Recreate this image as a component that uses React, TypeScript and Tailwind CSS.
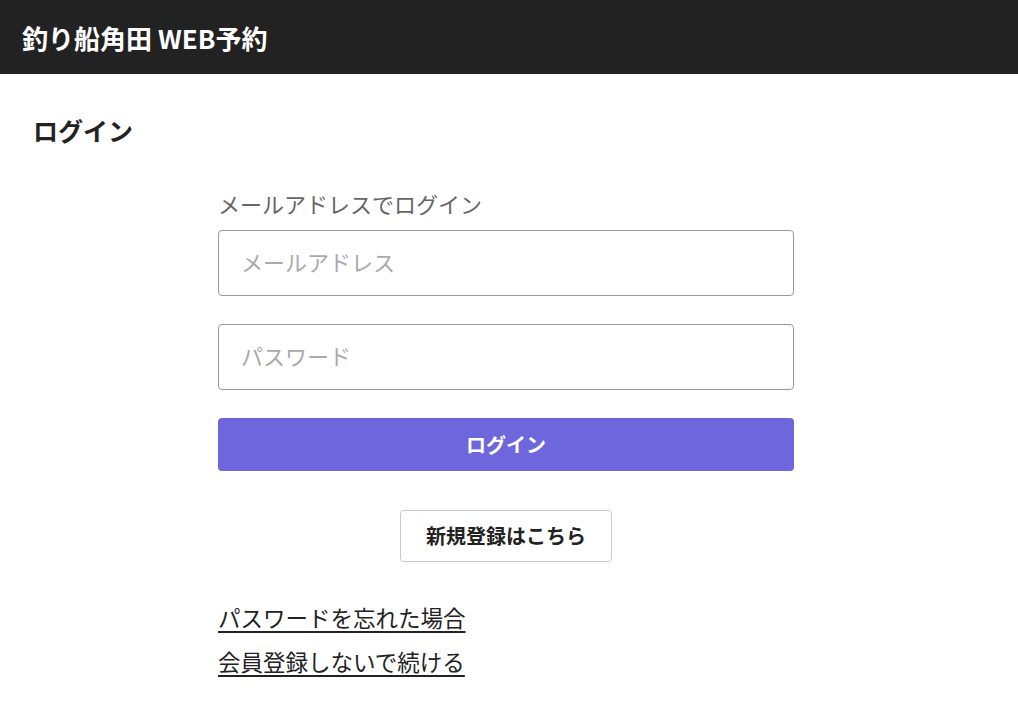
export default function App() {
  return (
    <div className="min-h-screen bg-white text-[#222] font-['Noto_Sans_CJK_JP',sans-serif]">
      <header className="h-[74px] bg-[#222222] flex items-center px-[22px]">
        <h1 className="text-[26px] font-bold text-white">釣り船角田 WEB予約</h1>
      </header>

      <main className="px-[33px] pt-[38px]">
        <h2 className="text-[25px] font-bold leading-[36px]">ログイン</h2>

        <div className="w-[576px] ml-[185px] mt-[41px] flex flex-col">
          <p className="text-[22px] text-[#666] leading-[28px]">メールアドレスでログイン</p>
          <input
            type="email"
            placeholder="メールアドレス"
            className="mt-[13px] h-[66px] w-full rounded border border-[#999] px-[22px] pb-[5px] text-[22px] placeholder:text-[#aaa] outline-none"
          />
          <input
            type="password"
            placeholder="パスワード"
            className="mt-[28px] h-[66px] w-full rounded border border-[#999] px-[22px] pb-[5px] text-[22px] placeholder:text-[#aaa] outline-none"
          />
          <button className="mt-[28px] h-[53px] w-full rounded bg-[#6e66dc] text-white text-[20px] font-bold">
            ログイン
          </button>

          <div className="mt-[39px] flex justify-center">
            <button className="h-[52px] w-[212px] rounded border border-[#ccc] bg-white text-[20px] font-bold text-[#222]">
              新規登録はこちら
            </button>
          </div>

          <div className="mt-[40px] flex flex-col items-start gap-[14px]">
            <a href="#" className="text-[22.5px] leading-[30px] underline underline-offset-4 text-[#222]">
              パスワードを忘れた場合
            </a>
            <a href="#" className="text-[22.5px] leading-[30px] underline underline-offset-4 text-[#222]">
              会員登録しないで続ける
            </a>
          </div>
        </div>
      </main>
    </div>
  );
}
